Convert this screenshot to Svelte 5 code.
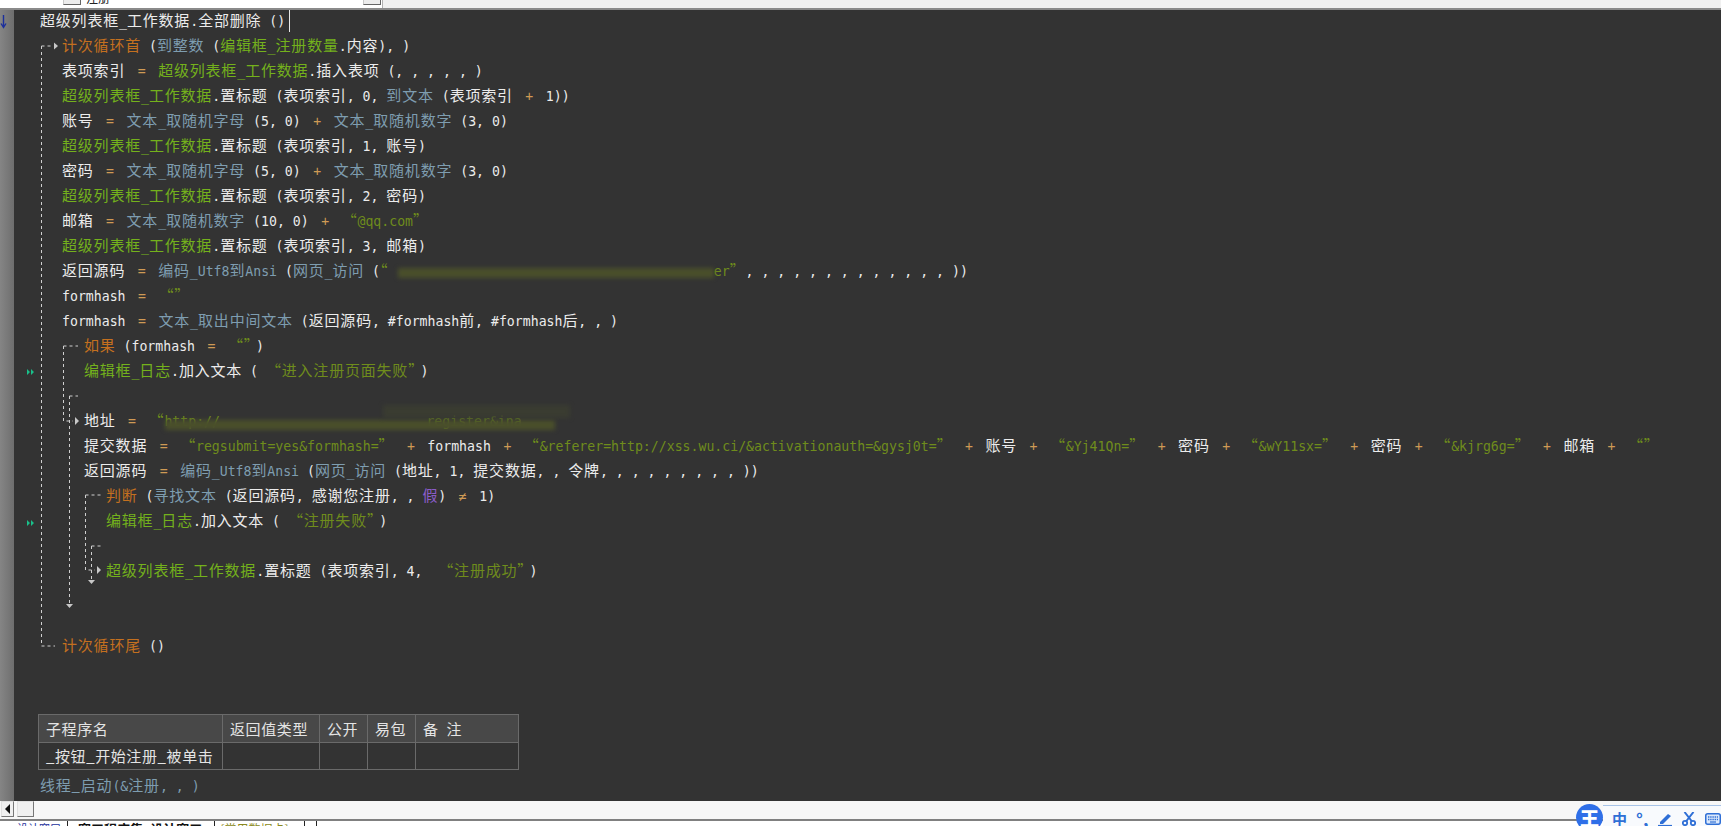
<script>
  const K = 'kw', F = 'fn', B = 'api', T = 'txt', S = 'str', O = 'op', P = 'bool', G = 'close';

  // one row = [indent level, tokens]; a token is [class, text]
  const rows = [
    [0, [[T, '超级列表框_工作数据.全部删除 ()']]],
    [1, [[K, '计次循环首'], [T, ' ('], [B, '到整数'], [T, ' ('], [F, '编辑框_注册数量'], [T, '.内容), )']]],
    [1, [[T, '表项索引'], [O, '='], [F, '超级列表框_工作数据'], [T, '.插入表项 (, , , , , )']]],
    [1, [[F, '超级列表框_工作数据'], [T, '.置标题 (表项索引, 0, '], [B, '到文本'], [T, ' (表项索引'], [O, '+'], [T, '1))']]],
    [1, [[T, '账号'], [O, '='], [B, '文本_取随机字母'], [T, ' (5, 0)'], [O, '+'], [B, '文本_取随机数字'], [T, ' (3, 0)']]],
    [1, [[F, '超级列表框_工作数据'], [T, '.置标题 (表项索引, 1, 账号)']]],
    [1, [[T, '密码'], [O, '='], [B, '文本_取随机字母'], [T, ' (5, 0)'], [O, '+'], [B, '文本_取随机数字'], [T, ' (3, 0)']]],
    [1, [[F, '超级列表框_工作数据'], [T, '.置标题 (表项索引, 2, 密码)']]],
    [1, [[T, '邮箱'], [O, '='], [B, '文本_取随机数字'], [T, ' (10, 0)'], [O, '+'], [S, '“@qq.com”']]],
    [1, [[F, '超级列表框_工作数据'], [T, '.置标题 (表项索引, 3, 邮箱)']]],
    [1, [[T, '返回源码'], [O, '='], [B, '编码_Utf8到Ansi'], [T, ' ('], [B, '网页_访问'], [T, ' ('], [S, '“                                         er”'], [T, ', , , , , , , , , , , , , ))']]],
    [1, [[T, 'formhash'], [O, '='], [S, '“”']]],
    [1, [[T, 'formhash'], [O, '='], [B, '文本_取出中间文本'], [T, ' (返回源码, #formhash前, #formhash后, , )']]],
    [2, [[K, '如果'], [T, ' (formhash'], [O, '='], [S, '“”'], [G, ')']]],
    [2, [[F, '编辑框_日志'], [T, '.加入文本 ( '], [S, '“进入注册页面失败”'], [G, ')']]],
    [2, []],
    [2, [[T, '地址'], [O, '='], [S, '“http://                          register&ina']]],
    [2, [[T, '提交数据'], [O, '='], [S, '“regsubmit=yes&formhash=”'], [O, '+'], [T, 'formhash'], [O, '+'], [S, '“&referer=http://xss.wu.ci/&activationauth=&gysj0t=”'], [O, '+'], [T, '账号'], [O, '+'], [S, '“&Yj41Qn=”'], [O, '+'], [T, '密码'], [O, '+'], [S, '“&wY11sx=”'], [O, '+'], [T, '密码'], [O, '+'], [S, '“&kjrg6g=”'], [O, '+'], [T, '邮箱'], [O, '+'], [S, '“”']]],
    [2, [[T, '返回源码'], [O, '='], [B, '编码_Utf8到Ansi'], [T, ' ('], [B, '网页_访问'], [T, ' (地址, 1, 提交数据, , 令牌, , , , , , , , , ))']]],
    [3, [[K, '判断'], [T, ' ('], [B, '寻找文本'], [T, ' (返回源码, 感谢您注册, , '], [P, '假'], [T, ')'], [O, '≠'], [T, '1)']]],
    [3, [[F, '编辑框_日志'], [T, '.加入文本 ( '], [S, '“注册失败”'], [G, ')']]],
    [3, []],
    [3, [[F, '超级列表框_工作数据'], [T, '.置标题 (表项索引, 4, '], [S, ' “注册成功”'], [G, ')']]],
    [3, []],
    [2, []],
    [1, [[K, '计次循环尾'], [T, ' ()']]]
  ];

  // wide glyphs take a double cell, so they need their own font and size
  function runs(text) {
    return text.match(/[\u2e80-\u9fff\uff00-\uffef“”]+|[^\u2e80-\u9fff\uff00-\uffef“”]+/g) || [];
  }
  function isWide(run) {
    return /^[\u2e80-\u9fff\uff00-\uffef“”]/.test(run);
  }

  const head = ['子程序名', '返回值类型', '公开', '易包', '备  注'];
  const cells = ['_按钮_开始注册_被单击', '', '', '', ''];

  const dashes = [
    'M41.5 46H52M41.5 46V646H55',
    'M63.5 346H78M63.5 346V421H73',
    'M69.5 396H78M69.5 396V604',
    'M85.5 495H101M85.5 495V570H95',
    'M91.5 546H101M91.5 546V580'
  ];
  const heads = [
    'M54 42.5L58 46L54 49.5Z',
    'M75 417L79 421L75 425Z',
    'M97 566L101 570L97 574Z',
    'M66 604H73L69.5 608Z',
    'M88 580H95L91.5 584Z'
  ];
</script>

<div class="window">
  <div class="topbar">
    <div class="combos">
      <div class="combo">
        <span class="field"></span><span class="bevel"></span>
      </div>
      <div class="combo wide">
        <span class="field">注册</span><span class="bevel"></span>
      </div>
    </div>
  </div>

  <div class="editor">
    <div class="gutter"></div>
    <div class="code">
      <div class="lines">
        {#each rows as [level, tokens]}
          <div class="row level{level}">
            {#each tokens as [cls, text]}
              <span class={cls}>
                {#each runs(text) as run}<span class:cjk={isWide(run)} class:lat={!isWide(run)}>{run}</span>{/each}
              </span>
            {/each}
          </div>
        {/each}
      </div>

      <table class="sub">
        <thead>
          <tr>{#each head as h}<th>{h}</th>{/each}</tr>
        </thead>
        <tbody>
          <tr>{#each cells as c}<td>{c}</td>{/each}</tr>
        </tbody>
      </table>
      <div class="row level0 last">
        <span class="api"><span class="cjk">线程_启动</span><span class="lat"> (&amp;</span><span class="cjk">注册</span><span class="lat">, , )</span></span>
      </div>
    </div>

    <svg class="flow" width="300" height="801" viewBox="0 0 300 801">
      {#each dashes as d}
        <path {d} fill="none" stroke="#d0d0d0" stroke-dasharray="3 3" />
      {/each}
      {#each heads as d}
        <path {d} fill="#c8c8c8" />
      {/each}
      <path d="M3.5 15V27M1 23.5L3.5 27.5L6 23.5" fill="none" stroke="#1c2f9c" stroke-width="1.4" />
      <path d="M27 369L30 372L27 375ZM31 369L34 372L31 375Z" fill="#19c08a" />
      <path d="M27 520L30 523L27 526ZM31 520L34 523L31 526Z" fill="#19c08a" />
    </svg>

    <span class="caret"></span>
    <span class="smudge s1"></span>
    <span class="smudge s2"></span>
    <span class="smudge s3"></span>
  </div>

  <div class="hscroll">
    <span class="btn">
      <svg width="6" height="10" viewBox="0 0 6 10"><path d="M5 0V10L0 5Z" fill="#111" /></svg>
    </span>
    <span class="btn thumb"></span>
  </div>

  <div class="tabs">
    <span class="tab blue">设计窗口</span>
    <span class="tab active">窗口程序集_设计窗口</span>
    <span class="tab olive">[常用数据卡]</span>
    <span class="tab"></span>
  </div>

  <div class="ime">
    <span class="logo">王</span>
    <span class="ime-txt zh">中</span>
    <span class="ime-txt punct">°,</span>
    <svg width="15" height="14" viewBox="0 0 15 14"><path d="M2 10L10 2L13 4L5 12H2Z" fill="#2f6fd6" /><path d="M0 13.5H14" stroke="#2f6fd6" stroke-width="1.2" /></svg>
    <svg width="14" height="14" viewBox="0 0 14 14"><path d="M2.5 0L10 9.5M11.5 0L4 9.5" stroke="#2f6fd6" stroke-width="2" /><circle cx="3" cy="11" r="2.2" fill="none" stroke="#2f6fd6" stroke-width="1.8" /><circle cx="11" cy="11" r="2.2" fill="none" stroke="#2f6fd6" stroke-width="1.8" /></svg>
    <svg width="16" height="12" viewBox="0 0 16 12"><rect x="0.75" y="0.75" width="14.5" height="10.5" rx="2" fill="#dbe8fb" stroke="#2f6fd6" stroke-width="1.5" /><path d="M3 4H13M3 6.5H13" stroke="#2f6fd6" stroke-width="1.4" stroke-dasharray="1.4 .8" /><path d="M5 9H11" stroke="#2f6fd6" stroke-width="1.2" /></svg>
  </div>
</div>

<style>
  :global(body) {
    margin: 0;
    overflow: hidden;
    background: #fff;
  }

  .window {
    position: relative;
    width: 1721px;
    height: 826px;
    overflow: hidden;
    display: flex;
    flex-direction: column;
    font-family: "DejaVu Sans Mono", monospace;
  }

  .topbar {
    flex: none;
    height: 8px;
    display: flex;
    background: #f0f0f0;
    border-bottom: 2px solid #8a8a8a;
    overflow: hidden;
  }

  .combos {
    width: 382px;
    height: 5px;
    display: flex;
    align-items: flex-end;
    gap: 2px;
    padding-bottom: 3px;
    background: #fff;
    border-right: 1px solid #b0b0b0;
  }

  .combo {
    width: 81px;
    height: 22px;
    flex: none;
    display: flex;
  }

  .combo.wide {
    width: 298px;
  }

  .field {
    flex: 1;
    padding-left: 3px;
    font: 12px/22px "Noto Sans CJK SC", sans-serif;
    color: #222;
    transform: translateY(4px);
  }

  .bevel {
    width: 16px;
    background: #ececec;
    border: 1px solid #c8c8c8;
    border-right-color: #666;
    border-bottom-color: #666;
  }

  .editor {
    position: relative;
    flex: none;
    height: 791px;
    display: flex;
    background: #333;
    color: #ececec;
  }

  .gutter {
    flex: none;
    width: 14px;
    background: linear-gradient(90deg, #858585, #6e6e6e);
  }

  .code {
    flex: 1;
    min-width: 0;
  }

  .lines {
    margin-top: -3px;
  }

  .row {
    height: 25px;
    line-height: 25px;
    white-space: pre;
  }

  .level0 { padding-left: 26px; }
  .level1 { padding-left: 48px; }
  .level2 { padding-left: 70px; }
  .level3 { padding-left: 92px; }

  .lat {
    font-size: 13.2px;
  }

  .cjk {
    font-family: "Noto Sans CJK SC", sans-serif;
    font-size: 15px;
    letter-spacing: 0.8px;
  }

  .kw { color: #c4701f; }
  .fn { color: #74b11c; }
  .api { color: #7e9db0; }
  .str { color: #6f8c1c; }
  .bool { color: #8a5cc8; }

  .close {
    margin-left: 4px;
  }

  .op {
    display: inline-block;
    margin: 0 12.5px;
    color: #cf9a55;
  }

  table.sub {
    margin: 57px 0 0 24px;
    width: 481px;
    border-collapse: collapse;
    table-layout: fixed;
    font-family: "Noto Sans CJK SC", sans-serif;
    font-size: 15px;
    color: #e4e4e4;
    border: 1px solid #6a6a6a;
  }

  table.sub th,
  table.sub td {
    border: 1px solid #6a6a6a;
    padding: 0 0 0 7px;
    text-align: left;
    font-weight: 400;
    white-space: pre;
    overflow: hidden;
    letter-spacing: 0.6px;
    line-height: 20px;
  }

  table.sub th {
    height: 27px;
    background: #484848;
  }

  table.sub td {
    height: 26px;
  }

  table.sub th:nth-child(1) { width: 176px; }
  table.sub th:nth-child(2) { width: 89px; }
  table.sub th:nth-child(3),
  table.sub th:nth-child(4) { width: 40px; }

  .last {
    margin-top: 1.5px;
  }

  .flow {
    position: absolute;
    left: 0;
    top: -10px;
    pointer-events: none;
  }

  .caret {
    position: absolute;
    left: 289px;
    top: 0;
    width: 1px;
    height: 22px;
    background: #e8e8e8;
  }

  .smudge {
    position: absolute;
    filter: blur(2px);
    background: #4a4f2b;
  }

  .s1 {
    left: 398px;
    top: 258px;
    width: 316px;
    height: 10px;
  }

  .s2 {
    left: 165px;
    top: 410px;
    width: 390px;
    height: 10px;
  }

  .s3 {
    left: 383px;
    top: 395px;
    width: 187px;
    height: 13px;
    background: #3a3c31;
  }

  .hscroll {
    flex: none;
    height: 18px;
    display: flex;
    gap: 3px;
    align-items: flex-start;
    padding: 0 0 0 1px;
    box-sizing: border-box;
    background: #f7f7f7;
  }

  .btn {
    width: 13px;
    height: 16px;
    display: flex;
    align-items: center;
    justify-content: center;
    background: #f0f0f0;
    border: 1px solid #e0e0e0;
    border-right-color: #777;
    border-bottom-color: #777;
    box-sizing: border-box;
  }

  .thumb {
    width: 17px;
  }

  .tabs {
    flex: none;
    height: 5px;
    display: flex;
    border-top: 2px solid #808080;
    padding-left: 14px;
    background: #fff;
  }

  .tab {
    height: 5px;
    white-space: nowrap;
    font: 11px/15px "Noto Sans CJK SC", sans-serif;
    color: #111;
    padding: 0 8px 0 3px;
    border-right: 1px solid #222;
  }

  .blue {
    color: #1c2f9c;
    width: 43px;
    padding-right: 7px;
  }

  .active {
    font-weight: 700;
    font-size: 13px;
    padding: 0 12px 0 10px;
  }

  .olive {
    color: #8a8a20;
    font-size: 12px;
    padding: 0 15px 0 5px;
  }

  .ime {
    position: absolute;
    left: 1603px;
    top: 805px;
    width: 118px;
    height: 21px;
    display: flex;
    align-items: center;
    padding: 5px 0 0 9px;
    gap: 9px;
    background: #f8fafd;
    border-top: 1px solid #a8c4e8;
    box-sizing: border-box;
  }

  .logo {
    position: absolute;
    left: -27px;
    top: -2px;
    width: 27px;
    height: 27px;
    border-radius: 50%;
    background: #2f6fe8;
    color: #fff;
    font: 900 19px/27px "Noto Sans CJK SC", sans-serif;
    text-align: center;
  }

  .ime-txt {
    color: #2f6fd6;
    font-weight: 700;
    font-family: "Noto Sans CJK SC", sans-serif;
    line-height: 15px;
  }

  .zh { font-size: 15px; }
  .punct {
    font-size: 17px;
    width: 13px;
  }
</style>
